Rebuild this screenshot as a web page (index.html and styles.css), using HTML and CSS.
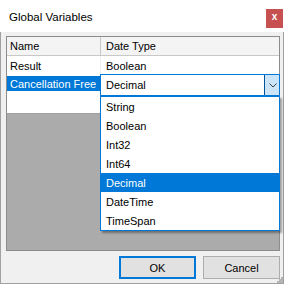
FILE: index.html
```html
<!DOCTYPE html>
<html lang="en">
<head>
    <meta charset="UTF-8">
    <title>Global Variables</title>
    <link rel="stylesheet" href="styles.css">
</head>
<body>
    <div class="dialog">
        <div class="titlebar">
            <span class="title">Global Variables</span>
            <span class="close">x</span>
        </div>
        <div class="content">
            <div class="grid">
                <div class="grid-header">
                    <div class="col-name">Name</div>
                    <div class="col-type">Date Type</div>
                </div>
                <div class="rows">
                    <div class="row">
                        <div class="col-name">Result</div>
                        <div class="col-type">Boolean</div>
                    </div>
                    <div class="row selected">
                        <div class="col-name">Cancellation Free</div>
                        <div class="col-type"></div>
                    </div>
                </div>

                <div class="combo">
                    <span class="combo-value">Decimal</span>
                    <span class="combo-button">
                        <svg width="8" height="5" viewBox="0 0 8 5"><path d="M0.5 0.5 L4 4 L7.5 0.5" fill="none" stroke="#404040" stroke-width="1"/></svg>
                    </span>
                </div>
                <ul class="dropdown">
                    <li>String</li>
                    <li>Boolean</li>
                    <li>Int32</li>
                    <li>Int64</li>
                    <li class="active">Decimal</li>
                    <li>DateTime</li>
                    <li>TimeSpan</li>
                </ul>
            </div>
            <div class="actions">
                <button class="btn default">OK</button>
                <button class="btn">Cancel</button>
            </div>
            <svg class="grip" width="7" height="7" viewBox="0 0 7 7">
                <rect x="5" y="1" width="2" height="2" fill="#b4b4b4"/>
                <rect x="3" y="3" width="2" height="2" fill="#b4b4b4"/>
                <rect x="5" y="3" width="2" height="2" fill="#b4b4b4"/>
                <rect x="1" y="5" width="2" height="2" fill="#b4b4b4"/>
                <rect x="3" y="5" width="2" height="2" fill="#b4b4b4"/>
                <rect x="5" y="5" width="2" height="2" fill="#b4b4b4"/>
            </svg>
        </div>
    </div>
</body>
</html>
```

FILE: styles.css
```css
:root {
    --face: #f0f0f0;
    --accent: #0078d7;
    --frame: #a0a0a0;
    --grid-border: #8c8c8c;
    --workspace: #ababab;
}

body {
    margin: 0;
    background: #ffffff;
    font-family: 'Liberation Sans', Arial, sans-serif;
    font-size: 11px;
    color: #000000;
}

.dialog {
    width: 284px;
    height: 284px;
    display: flex;
    flex-direction: column;
}

.titlebar {
    height: 32px;
    background: #ffffff;
    display: flex;
    align-items: center;
    justify-content: space-between;
    padding: 0 1px 0 9px;
    box-sizing: border-box;
}

.title {
    font-size: 11.5px;
    margin-top: 1px;
}

.close {
    width: 17px;
    height: 19px;
    margin-top: 4px;
    background: #c75050;
    color: #ffffff;
    font-weight: bold;
    font-size: 10px;
    display: flex;
    align-items: center;
    justify-content: center;
    line-height: 1;
    padding-bottom: 2px;
    box-sizing: border-box;
}

.content {
    flex: 1;
    position: relative;
    background: var(--face);
    border: 1px solid var(--frame);
    border-top: none;
    padding: 4px 3px 4px 5px;
    display: flex;
    flex-direction: column;
}

.grid {
    position: relative;
    height: 215px;
    box-sizing: border-box;
    border: 1px solid var(--grid-border);
    background: var(--workspace);
    display: flex;
    flex-direction: column;
}

.grid-header {
    display: flex;
    height: 19px;
    box-sizing: border-box;
    background: #f4f4f4;
    border-bottom: 1px solid #c8c8c8;
}

.grid-header .col-name {
    border-right: 1px solid #c8c8c8;
}

.col-name {
    width: 94px;
    padding-left: 3px;
    box-sizing: border-box;
    display: flex;
    align-items: center;
    white-space: nowrap;
}

.col-type {
    flex: 1;
    padding-left: 5px;
    display: flex;
    align-items: center;
}

.rows {
    height: 58px;
    box-sizing: border-box;
    background: #ffffff;
    border-bottom: 1px solid #a0a0a0;
}

.row {
    display: flex;
    height: 20px;
}

.row .col-name {
    border-right: 1px solid #f0f0f0;
}

.row.selected {
    height: 15px;
}

.row.selected .col-name {
    background: var(--accent);
    color: #ffffff;
    border-right: none;
    padding-top: 1px;
}

.combo {
    position: absolute;
    left: 93px;
    top: 37px;
    width: 180px;
    height: 22px;
    box-sizing: border-box;
    border: 1px solid var(--accent);
    background: #ffffff;
    display: flex;
    align-items: center;
}

.combo-value {
    flex: 1;
    padding-left: 5px;
}

.combo-button {
    width: 15px;
    height: 100%;
    box-sizing: border-box;
    background: #cce4f7;
    border-left: 1px solid #005499;
    display: flex;
    align-items: center;
    justify-content: center;
    padding-left: 1px;
}

.dropdown {
    position: absolute;
    left: 93px;
    top: 59px;
    width: 180px;
    margin: 0;
    padding: 0;
    list-style: none;
    box-sizing: border-box;
    border: 1px solid var(--accent);
    background: #ffffff;
    box-shadow: 2px 2px 2px rgba(0, 0, 0, 0.35);
}

.dropdown li {
    height: 19px;
    padding-left: 5px;
    display: flex;
    align-items: center;
}

.dropdown li.active {
    background: var(--accent);
    color: #ffffff;
}

.actions {
    display: flex;
    justify-content: flex-end;
    gap: 7px;
    margin-top: 5px;
}

.btn {
    width: 77px;
    height: 23px;
    box-sizing: border-box;
    background: #e1e1e1;
    border: 1px solid #adadad;
    font-family: inherit;
    font-size: 11px;
    color: #000000;
    padding: 0;
}

.btn.default {
    border: 2px solid var(--accent);
}

.grip {
    position: absolute;
    right: 0;
    bottom: 0;
}
```
